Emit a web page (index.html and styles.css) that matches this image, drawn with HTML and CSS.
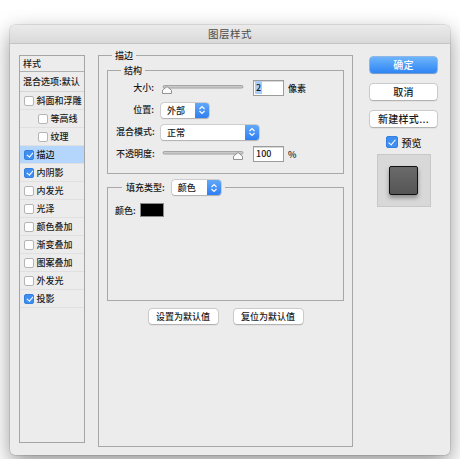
FILE: index.html
```html
<!DOCTYPE html>
<html lang="zh">
<head>
<meta charset="utf-8">
<title>图层样式</title>
<link rel="stylesheet" href="styles.css">
</head>
<body>
<div class="window">
  <div class="titlebar">图层样式</div>
  <div class="content">
    <div class="list">
      <div class="list-head">样式</div>
      <div class="list-row blend">混合选项:默认</div>
      <div class="list-row"><span class="cb"></span>斜面和浮雕</div>
      <div class="list-row sub"><span class="cb"></span>等高线</div>
      <div class="list-row sub"><span class="cb"></span>纹理</div>
      <div class="list-row selected"><span class="cb on"></span>描边</div>
      <div class="list-row"><span class="cb on"></span>内阴影</div>
      <div class="list-row"><span class="cb"></span>内发光</div>
      <div class="list-row"><span class="cb"></span>光泽</div>
      <div class="list-row"><span class="cb"></span>颜色叠加</div>
      <div class="list-row"><span class="cb"></span>渐变叠加</div>
      <div class="list-row"><span class="cb"></span>图案叠加</div>
      <div class="list-row"><span class="cb"></span>外发光</div>
      <div class="list-row"><span class="cb on"></span>投影</div>
    </div>

    <fieldset class="group outer">
      <legend>描边</legend>
      <fieldset class="group inner struct">
        <legend>结构</legend>
        <div class="form">
          <span class="lbl">大小:</span>
          <div class="ctrl">
            <svg class="slider" width="84" height="10" viewBox="0 0 84 10">
              <rect x="2" y="1.5" width="80" height="2.6" rx="1.3" fill="#c9c9c9" stroke="#8e8e8e" stroke-width="0.7"/>
              <path d="M1.5 9.5 V6.2 L6 2.6 L10.5 6.2 V9.5 Z" fill="#fbfbfb" stroke="#7c7c7c" stroke-width="0.8" stroke-linejoin="round"/>
            </svg>
            <span class="num sel-num"><span class="hl">2</span></span>
            <span class="unit">像素</span>
          </div>
          <span class="lbl">位置:</span>
          <div class="ctrl">
            <span class="select w48"><span class="sv">外部</span><span class="arrows"><svg width="8" height="10" viewBox="0 0 8 10"><path d="M1.5 4 L4 1.5 L6.5 4 M1.5 6 L4 8.5 L6.5 6" fill="none" stroke="#fff" stroke-width="1.1"/></svg></span></span>
          </div>
          <span class="lbl">混合模式:</span>
          <div class="ctrl">
            <span class="select w98"><span class="sv">正常</span><span class="arrows"><svg width="8" height="10" viewBox="0 0 8 10"><path d="M1.5 4 L4 1.5 L6.5 4 M1.5 6 L4 8.5 L6.5 6" fill="none" stroke="#fff" stroke-width="1.1"/></svg></span></span>
          </div>
          <span class="lbl">不透明度:</span>
          <div class="ctrl">
            <svg class="slider" width="84" height="10" viewBox="0 0 84 10">
              <rect x="2" y="1.5" width="80" height="2.6" rx="1.3" fill="#c9c9c9" stroke="#8e8e8e" stroke-width="0.7"/>
              <path d="M72.5 9.5 V6.2 L77 2.6 L81.5 6.2 V9.5 Z" fill="#fbfbfb" stroke="#7c7c7c" stroke-width="0.8" stroke-linejoin="round"/>
            </svg>
            <span class="num">100</span>
            <span class="unit">%</span>
          </div>
        </div>
      </fieldset>

      <fieldset class="group inner fill">
        <legend><span class="fill-lbl">填充类型:</span><span class="select w49"><span class="sv">颜色</span><span class="arrows"><svg width="8" height="10" viewBox="0 0 8 10"><path d="M1.5 4 L4 1.5 L6.5 4 M1.5 6 L4 8.5 L6.5 6" fill="none" stroke="#fff" stroke-width="1.1"/></svg></span></span></legend>
        <div class="color-row"><span>颜色:</span><span class="swatch"></span></div>
      </fieldset>

      <div class="defaults">
        <button class="btn small">设置为默认值</button>
        <button class="btn small">复位为默认值</button>
      </div>
    </fieldset>

    <div class="side">
      <button class="btn big primary">确定</button>
      <button class="btn big">取消</button>
      <button class="btn big">新建样式...</button>
      <div class="preview-cb"><span class="cb on big-cb"></span>预览</div>
      <div class="preview"><div class="square"></div></div>
    </div>
  </div>
</div>
</body>
</html>
```

FILE: styles.css
```css
html, body {
  margin: 0;
  padding: 0;
  background: #ffffff;
}
body {
  font-family: "Noto Sans CJK SC", "Noto Sans", sans-serif;
  font-size: 9px;
  font-weight: 500;
  color: #1a1a1a;
  width: 460px;
  height: 459px;
  overflow: hidden;
}
.window {
  margin: 25px 0 0 10px;
  width: 440px;
  height: 430px;
  background: #ececec;
  border-radius: 5px;
  box-shadow: 0 0 0 0.5px rgba(0,0,0,0.18), 0 8px 22px rgba(0,0,0,0.42);
  overflow: hidden;
  display: flex;
  flex-direction: column;
}
.titlebar {
  height: 18px;
  line-height: 18px;
  text-align: center;
  font-size: 10.5px;
  font-weight: 400;
  color: #4b4b4b;
  background: linear-gradient(#ebebeb, #d9d9d9);
  border-bottom: 1px solid #c4c4c4;
  letter-spacing: 0.5px;
}
.content {
  display: flex;
  align-items: flex-start;
  padding: 11px 0 0 9px;
}
/* left list */
.list {
  width: 64px;
  height: 386px;
  border: 1px solid #a5a5a5;
  background: #ececec;
  display: flex;
  flex-direction: column;
}
.list-head {
  height: 15px;
  line-height: 15px;
  padding-left: 3px;
  border-bottom: 1px solid #b0b0b0;
}
.list-row {
  height: 17px;
  display: flex;
  align-items: center;
  padding-left: 4px;
  border-bottom: 1px solid #e0e0e0;
  white-space: nowrap;
}
.list-row.blend {
  height: 19px;
  padding-left: 3px;
  border-bottom: 1px solid #d6d6d6;
}
.list-row.sub {
  padding-left: 18px;
}
.list-row.selected {
  background: #b4d6fc;
}
.cb {
  width: 8px;
  height: 8px;
  border: 1px solid #b5b5b5;
  border-radius: 2px;
  background: #fff;
  margin-right: 2.5px;
  flex: none;
  box-sizing: content-box;
  position: relative;
}
.cb.on {
  background: #3f8ff3;
  border-color: #347fe0;
}
.cb.on::after {
  content: "";
  position: absolute;
  left: 2.5px;
  top: 0px;
  width: 2.5px;
  height: 5px;
  border: solid #fff;
  border-width: 0 1.3px 1.3px 0;
  transform: rotate(40deg);
}
/* fieldsets */
.group {
  margin: 0;
  border: 1px solid #a8a8a8;
  min-width: 0;
}
.group legend {
  padding: 0 3px;
  margin-left: 5px;
  line-height: 13px;
}
.outer {
  margin-left: 13px;
  margin-top: -6px;
  width: 255px;
  height: 398px;
  padding: 2px 8px 0 8px;
  box-sizing: border-box;
}
.inner {
  padding: 0 8px;
}
.struct {
  height: 110px;
  box-sizing: border-box;
}
.form {
  display: grid;
  grid-template-columns: 38px 1fr;
  column-gap: 7px;
  row-gap: 6px;
  align-items: center;
  padding-top: 3px;
}
.lbl {
  text-align: right;
  white-space: nowrap;
  height: 16px;
  line-height: 16px;
}
.lbl:nth-of-type(5) {
  margin-top: 1px;
}
.ctrl {
  display: flex;
  align-items: center;
  height: 16px;
}
.slider {
  flex: none;
  margin-top: 1px;
}
.num {
  margin-left: 8px;
  width: 27px;
  height: 14px;
  line-height: 14px;
  border: 1px solid #9c9c9c;
  background: #fff;
  padding-left: 2px;
  box-shadow: inset 0 1px 0 #d8d8d8;
}
.hl {
  background: #a9cdf8;
  padding: 0 1px;
}
.sel-num .hl {
  margin-left: -1px;
}
.unit {
  margin-left: 4px;
}
.select {
  display: inline-flex;
  height: 15px;
  border-radius: 3px;
  background: #fff;
  box-shadow: 0 0 0 0.5px #b3b3b3, 0 0.5px 1px rgba(0,0,0,0.25);
  overflow: hidden;
}
.sv {
  flex: 1;
  padding-left: 6px;
  line-height: 15px;
}
.arrows {
  width: 14px;
  background: linear-gradient(#62a8f9, #2f7ff1);
  display: flex;
  align-items: center;
  justify-content: center;
}
.w48 { width: 48px; }
.w98 { width: 98px; }
.w49 { width: 49px; }
.fill {
  margin-top: 6px;
  height: 121px;
  box-sizing: border-box;
}
.fill legend {
  display: flex;
  align-items: center;
  margin-left: 6px;
  padding: 0 4px;
  line-height: 15px;
}
.fill-lbl {
  margin-right: 7px;
}
.color-row {
  display: flex;
  align-items: center;
  margin-top: 8px;
  margin-left: -1px;
}
.swatch {
  margin-left: 4px;
  width: 22px;
  height: 12px;
  background: #000;
  border: 1px solid #8a8a8a;
}
.defaults {
  display: flex;
  justify-content: center;
  gap: 16px;
  margin-top: 8px;
}
/* buttons */
.btn {
  font-family: inherit;
  font-weight: 500;
  color: #1a1a1a;
  background: #fff;
  border: none;
  border-radius: 3px;
  box-shadow: 0 0 0 0.5px #b3b3b3, 0 0.5px 1.2px rgba(0,0,0,0.28);
  padding: 0;
  margin: 0;
}
.btn.small {
  width: 69px;
  height: 15px;
  font-size: 9px;
  line-height: 15px;
}
.side {
  margin-left: 17px;
  width: 67px;
  display: flex;
  flex-direction: column;
  align-items: center;
  padding-top: 2px;
}
.btn.big {
  width: 67px;
  height: 16px;
  font-size: 10px;
  line-height: 16px;
  margin-bottom: 11px;
  letter-spacing: 0.3px;
}
.btn.primary {
  color: #fff;
  background: linear-gradient(#6db4fb, #2f85f4);
  box-shadow: 0 0 0 0.5px #3d86e6, 0 0.5px 1px rgba(0,0,0,0.25);
}
.preview-cb {
  display: flex;
  align-items: center;
  font-size: 10px;
  margin-top: -2px;
  height: 12px;
}
.big-cb {
  width: 10px;
  height: 10px;
  margin-right: 4px;
}
.big-cb.on::after {
  left: 3px;
  top: 0.5px;
  width: 3px;
  height: 6px;
}
.preview {
  margin-top: 6px;
  width: 52px;
  height: 51px;
  border: 1px solid #c8c8c8;
  background: #d8d8d8;
  display: flex;
  align-items: center;
  justify-content: center;
}
.square {
  width: 27px;
  height: 27px;
  border: 1px solid #111;
  border-radius: 2px;
  background: linear-gradient(#6a6a6a, #555555);
  box-shadow: 0 3px 4px rgba(0,0,0,0.35);
}
```
